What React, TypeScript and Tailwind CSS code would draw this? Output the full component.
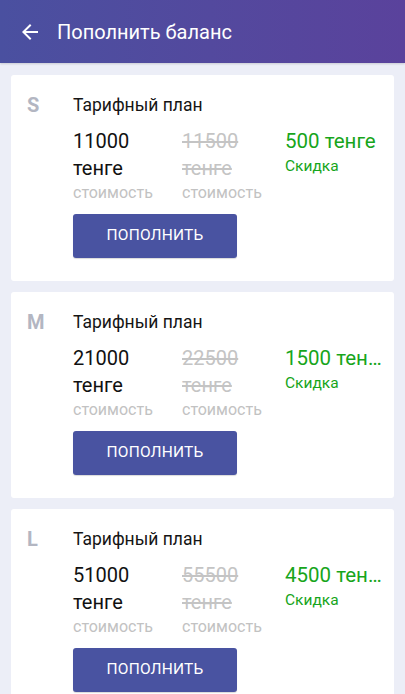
import React from "react";

const plans = [
  { letter: "S", price: "11000", old: "11500", discount: "500 тенге" },
  { letter: "M", price: "21000", old: "22500", discount: "1500 тенге" },
  { letter: "L", price: "51000", old: "55500", discount: "4500 тенге" },
];

function Card({ p }: { p: (typeof plans)[number] }) {
  return (
    <div className="bg-white rounded-[3px] h-[206px] shrink-0 flex pr-[12px] pt-[20px]">
      <div className="w-[62px] pl-[16px] text-[20px] leading-[21px] font-bold text-[#b3b6c2]">
        {p.letter}
      </div>
      <div className="flex-1 min-w-0 flex flex-col">
        <div className="text-[17.5px] leading-[21px] text-[#151515]">Тарифный план</div>
        <div className="flex mt-[12px]">
          <div className="w-[109px] shrink-0">
            <div className="text-[20px] leading-[27px] text-[#111]">{p.price}</div>
            <div className="text-[20px] leading-[27px] text-[#111]">тенге</div>
            <div className="text-[16px] leading-[22px] text-[#c2c2c2]">стоимость</div>
          </div>
          <div className="w-[103px] shrink-0">
            <div className="text-[20px] leading-[27px] text-[#c4c4c4] line-through">{p.old}</div>
            <div className="text-[20px] leading-[27px] text-[#c4c4c4] line-through">тенге</div>
            <div className="text-[16px] leading-[22px] text-[#c2c2c2]">стоимость</div>
          </div>
          <div className="flex-1 min-w-0">
            <div className="text-[20.5px] leading-[27px] text-[#17a51b] truncate">{p.discount}</div>
            <div className="text-[15.5px] leading-[23px] text-[#17a51b]">Скидка</div>
          </div>
        </div>
        <button className="mt-[10px] w-[164px] h-[44px] rounded-[3px] bg-[#4953a1] text-white text-[15.5px] tracking-[0.2px] flex items-center justify-center shadow-[0_1px_1px_rgba(0,0,0,0.15)]">
          ПОПОЛНИТЬ
        </button>
      </div>
    </div>
  );
}

export default function App() {
  return (
    <div
      className="w-[405px] h-[694px] overflow-hidden bg-[#eceef7] flex flex-col"
      style={{ fontFamily: "Roboto, 'Noto Sans', sans-serif" }}
    >
      <div className="h-[63px] shrink-0 bg-gradient-to-r from-[#4a50a0] to-[#5a429c] flex items-center pl-[18px] shadow-[0_1px_2px_rgba(0,0,0,0.15)]">
        <svg width="24" height="24" viewBox="0 0 24 24" fill="white">
          <path d="M20 11H7.83l5.59-5.59L12 4l-8 8 8 8 1.41-1.41L7.83 13H20v-2z" />
        </svg>
        <div className="ml-[15px] text-white text-[20px] leading-[24px]">Пополнить баланс</div>
      </div>
      <div className="flex flex-col gap-[11px] px-[11px] pt-[12px]">
        {plans.map((p) => (
          <Card key={p.letter} p={p} />
        ))}
      </div>
    </div>
  );
}
